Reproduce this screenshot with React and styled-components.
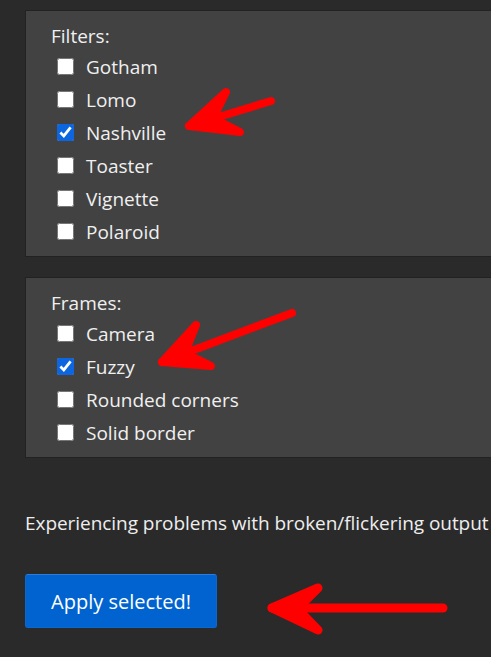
import React from "react";
import styled, { createGlobalStyle } from "styled-components";

const GlobalStyle = createGlobalStyle`
    html, body {
        margin: 0;
        padding: 0;
        background: #2a2a2a;
        overflow: hidden;
    }
    body {
        font-family: "Open Sans", "Noto Sans", sans-serif;
        color: #f2f2f2;
    }
`;

const Page = styled.div`
    position: relative;
    width: 491px;
    height: 657px;
    overflow: hidden;
`;

const Column = styled.div`
    display: flex;
    flex-direction: column;
    align-items: flex-start;
    padding: 10px 0 0 25px;
    width: 620px;
`;

const Panel = styled.div`
    box-sizing: border-box;
    width: 100%;
    margin: 0 0 ${(props) => props.gap || 0}px 0;
    padding: 11px 0 8px 25px;
    background: #424242;
    border: 1px solid #222;
    display: flex;
    flex-direction: column;
`;

const Legend = styled.div`
    font-size: 19px;
    line-height: 28px;
    color: #f0f0f0;
`;

const Row = styled.label`
    display: flex;
    align-items: center;
    height: 33px;
    padding-left: 6px;
    gap: 12px;
    font-size: 19px;
    color: #f0f0f0;

    input {
        width: 17px;
        height: 17px;
        margin: 0;
        accent-color: #0b66e0;
    }
`;

const Note = styled.p`
    margin: 51px 0 37px 0;
    font-size: 19px;
    line-height: 28px;
    white-space: nowrap;
    letter-spacing: -0.05px;
    color: #eeeeee;
`;

const ApplyButton = styled.button`
    width: 192px;
    height: 54px;
    background: #0063cf;
    border: 1px solid #0a68d2;
    border-top-color: #2a7ddc;
    border-radius: 3px;
    color: #fff;
    font-family: inherit;
    font-size: 20px;
    padding: 0;
`;

const Overlay = styled.svg`
    position: absolute;
    left: 0;
    top: 0;
    pointer-events: none;
`;

const Arrow = ({ tip, w1, w2, tail, width = 8 }) => (
    <g stroke="#ff0000" strokeWidth={width} strokeLinecap="round" strokeLinejoin="round" fill="#ff0000">
        <line x1={tip[0]} y1={tip[1]} x2={tail[0]} y2={tail[1]} />
        <polygon
            points={`${w1[0]},${w1[1]} ${tip[0]},${tip[1]} ${w2[0]},${w2[1]} ${(tip[0] * 0.45 + (w1[0] + w2[0]) * 0.275)},${(tip[1] * 0.45 + (w1[1] + w2[1]) * 0.275)}`}
        />
    </g>
);

const filters = [
    ["Gotham", false],
    ["Lomo", false],
    ["Nashville", true],
    ["Toaster", false],
    ["Vignette", false],
    ["Polaroid", false],
];

const frames = [
    ["Camera", false],
    ["Fuzzy", true],
    ["Rounded corners", false],
    ["Solid border", false],
];

export default function App() {
    return (
        <Page>
            <GlobalStyle />
            <Column>
                <Panel gap={20}>
                    <Legend>Filters:</Legend>
                    {filters.map(([name, on]) => (
                        <Row key={name}>
                            <input type="checkbox" defaultChecked={on} />
                            {name}
                        </Row>
                    ))}
                </Panel>
                <Panel>
                    <Legend>Frames:</Legend>
                    {frames.map(([name, on]) => (
                        <Row key={name}>
                            <input type="checkbox" defaultChecked={on} />
                            {name}
                        </Row>
                    ))}
                </Panel>
                <Note>Experiencing problems with broken/flickering output</Note>
                <ApplyButton>Apply selected!</ApplyButton>
            </Column>
            <Overlay width="491" height="657">
                <Arrow tip={[189, 126]} w1={[226, 92]} w2={[240, 132]} tail={[271, 101]} />
                <Arrow tip={[162, 362]} w1={[196, 325]} w2={[211, 366]} tail={[292, 313]} />
                <Arrow tip={[272, 608]} w1={[318, 588]} w2={[318, 630]} tail={[443, 608]} width={9} />
            </Overlay>
        </Page>
    );
}
